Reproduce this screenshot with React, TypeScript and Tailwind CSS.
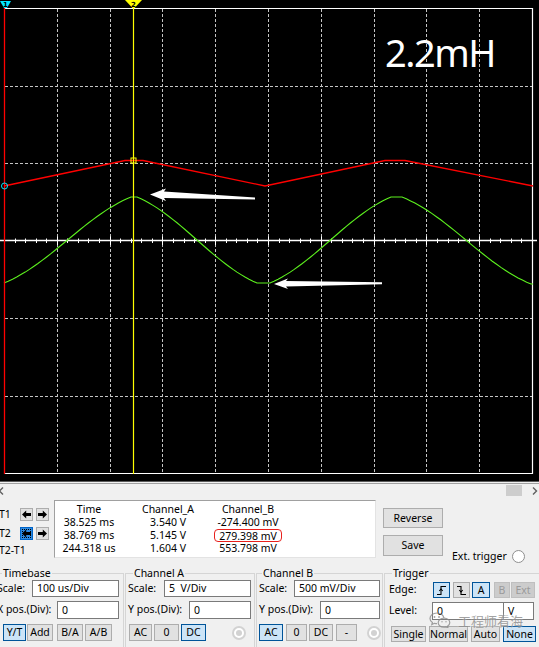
import React from "react";

type P = [number, number];

function ease(x0: number, y0: number, x1: number, y1: number, n = 30): P[] {
  const out: P[] = [];
  for (let i = 0; i <= n; i++) {
    const t = i / n;
    const f = 0.6 * t + 0.2 * (1 - Math.cos(Math.PI * t));
    out.push([x0 + (x1 - x0) * t, y0 + (y1 - y0) * f]);
  }
  return out;
}

const pts = (a: P[]) => a.map((p) => `${p[0].toFixed(1)},${p[1].toFixed(1)}`).join(" ");

function Scope() {
  const vx = Array.from({ length: 9 }, (_, i) => 4 + 52.8 * (i + 1));
  const hy = [85.5, 163, 318, 395.5];
  const ticks = Array.from({ length: 51 }, (_, i) => 4 + 10.56 * i);
  const green: P[] = [
    ...ease(4, 283, 131, 197),
    [137, 197],
    ...ease(137, 197, 257, 283),
    [270, 283],
    ...ease(270, 283, 391, 197),
    [402, 197],
    ...ease(402, 197, 531, 284),
    [533, 284],
  ];
  const red: P[] = [
    [4, 186],
    [125, 160.5],
    [143, 160.5],
    [265, 186],
    [385, 160.5],
    [405, 160.5],
    [533, 186],
  ];
  return (
    <div className="relative h-[481px] bg-black">
      <svg width="539" height="481" viewBox="0 0 539 481" className="block">
        {vx.map((x) => (
          <line key={"v" + x} x1={Math.round(x) + 0.5} y1={9} x2={Math.round(x) + 0.5} y2={473} stroke="#c4c4c4" strokeWidth={1} strokeDasharray="3 2" />
        ))}
        {hy.map((y) => (
          <line key={"h" + y} x1={5} y1={Math.round(y) + 0.5} x2={532} y2={Math.round(y) + 0.5} stroke="#c4c4c4" strokeWidth={1} strokeDasharray="3 2" />
        ))}
        {/* frame */}
        <line x1={4} y1={8.5} x2={533} y2={8.5} stroke="#fff" strokeWidth={1.2} />
        <line x1={4} y1={473.5} x2={533} y2={473.5} stroke="#fff" strokeWidth={1.2} />
        <line x1={532.5} y1={8} x2={532.5} y2={474} stroke="#fff" strokeWidth={1.2} />
        {/* axis */}
        <line x1={0} y1={240.5} x2={537} y2={240.5} stroke="#fff" strokeWidth={1.3} />
        {ticks.map((x, i) => (
          <line
            key={"t" + i}
            x1={Math.round(x) + 0.5}
            y1={i % 5 === 0 ? 236.5 : 238.5}
            x2={Math.round(x) + 0.5}
            y2={i % 5 === 0 ? 245 : 243}
            stroke="#fff"
            strokeWidth={1}
          />
        ))}
        {/* waves */}
        <polyline points={pts(red)} fill="none" stroke="#ff0000" strokeWidth={1.3} />
        <polyline points={pts(green)} fill="none" stroke="#5cf01e" strokeWidth={1.1} />
        {/* cursors */}
        <line x1={4.5} y1={8} x2={4.5} y2={474} stroke="#ff0000" strokeWidth={1.3} />
        <line x1={133.5} y1={8} x2={133.5} y2={474} stroke="#ffff00" strokeWidth={1.2} />
        <polygon points="0,1 11,1 7,8 4,8" fill="#00e5ff" />
        <text x={5.5} y={7} fontSize={7} fontFamily="DejaVu Sans, sans-serif" fontWeight={700} textAnchor="middle" fill="#000">1</text>
        <polygon points="125,0 142,0 134.5,8 132.5,8" fill="#ffff00" />
        <text x={133.5} y={6.5} fontSize={7} fontFamily="DejaVu Sans, sans-serif" fontWeight={700} textAnchor="middle" fill="#000">2</text>
        <circle cx={4.5} cy={186} r={3} fill="none" stroke="#00e5ff" strokeWidth={1} />
        <rect x={131} y={158} width={5} height={5} fill="none" stroke="#ffff00" strokeWidth={1} />
        {/* arrows */}
        <polygon points="150,194.5 166,188.5 164,191.5 255,197.5 255,199.5 164,198 166,201" fill="#fff" />
        <polygon points="274,284 288,278.5 286,281 382,282.3 382,284.3 286,286.5 288,289" fill="#fff" />
      </svg>
      <div className="absolute left-[385px] top-[33px] text-[38px] leading-none tracking-[-1.5px] text-white font-['Noto_Sans',sans-serif]">
        2.2mH
      </div>
    </div>
  );
}

function ArrowL() {
  return (
    <svg width="9" height="9" viewBox="0 0 9 9">
      <path d="M0 4.5 L4.2 0.5 V3 H9 V6 H4.2 V8.5 Z" fill="#000" />
    </svg>
  );
}
function ArrowR() {
  return (
    <svg width="9" height="9" viewBox="0 0 9 9">
      <path d="M9 4.5 L4.8 0.5 V3 H0 V6 H4.8 V8.5 Z" fill="#000" />
    </svg>
  );
}

function TBtn({ sel, children }: { sel?: boolean; children: React.ReactNode }) {
  return sel ? (
    <div className="w-[13px] h-[13px] flex items-center justify-center bg-[#2f8ae0] border border-[#0064c8] outline-1 outline-dotted outline-black outline-offset-[-3px]">
      {children}
    </div>
  ) : (
    <div className="w-[13px] h-[13px] flex items-center justify-center bg-[#e1e1e1] border border-[#adadad]">{children}</div>
  );
}

function Btn({
  children,
  className,
  sel,
  dis,
}: {
  children?: React.ReactNode;
  className: string;
  sel?: boolean;
  dis?: boolean;
}) {
  const tone = sel
    ? "bg-[#cce4f7] border-[#005499]"
    : dis
    ? "bg-[#cccccc] border-[#bfbfbf] text-[#9a9a9a]"
    : "bg-[#e1e1e1] border-[#adadad]";
  return <div className={`shrink-0 flex items-center justify-center border leading-none ${tone} ${className}`}>{children}</div>;
}

function Box({ children, className }: { children?: React.ReactNode; className: string }) {
  return <div className={`shrink-0 bg-white border border-[#7a7a7a] flex items-center pl-[4px] leading-none ${className}`}>{children}</div>;
}

function DisRadio() {
  return (
    <div className="shrink-0 w-[14px] h-[14px] rounded-full border-2 border-[#d2d2d2] bg-white flex items-center justify-center">
      <div className="w-[6px] h-[6px] rounded-full bg-[#d2d2d2]" />
    </div>
  );
}

function Panel() {
  return (
    <div className="h-[166px] flex flex-col">
      <div className="h-[3px] shrink-0 border-t border-[#5a5a5a] border-b border-b-[#a0a0a0]" />
      {/* scrollbar */}
      <div className="h-[13px] shrink-0 flex items-center justify-between">
        <svg width="6" height="8" viewBox="0 0 6 8" className="ml-[-2px]">
          <path d="M5 0.5 L1.5 4 L5 7.5" fill="none" stroke="#606060" strokeWidth={1.4} />
        </svg>
        <div className="flex items-center">
          <div className="w-[16px] h-[11px] bg-[#cdcdcd]" />
          <svg width="8" height="8" viewBox="0 0 8 8" className="ml-[9px]">
            <path d="M2 0.5 L5.5 4 L2 7.5" fill="none" stroke="#606060" strokeWidth={1.4} />
          </svg>
        </div>
      </div>
      {/* middle row */}
      <div className="h-[69px] shrink-0 flex items-start">
        <div className="w-[55px] ml-[-1px] shrink-0 pt-[11px]">
          <div className="flex items-center h-[13px]">
            <span className="w-[21px] leading-none">T1</span>
            <TBtn>
              <ArrowL />
            </TBtn>
            <div className="w-[3px]" />
            <TBtn>
              <ArrowR />
            </TBtn>
          </div>
          <div className="flex items-center h-[13px] mt-[6px]">
            <span className="w-[21px] leading-none">T2</span>
            <TBtn sel>
              <ArrowL />
            </TBtn>
            <div className="w-[3px]" />
            <TBtn>
              <ArrowR />
            </TBtn>
          </div>
          <div className="mt-[4px] leading-[12px]">T2-T1</div>
        </div>
        <div className="w-[322px] h-[58px] mt-[3px] shrink-0 bg-white border border-[#a0a0a0] border-r-[#e3e3e3] border-b-[#e3e3e3] pt-[2px] flex leading-[13px] text-[10.5px]">
          <div className="w-[68px] text-center">
            <div>Time</div>
            <div>38.525 ms</div>
            <div>38.769 ms</div>
            <div>244.318 us</div>
          </div>
          <div className="w-[90px] text-center">
            <div>Channel_A</div>
            <div>3.540 V</div>
            <div>5.145 V</div>
            <div>1.604 V</div>
          </div>
          <div className="w-[70px] text-center">
            <div>Channel_B</div>
            <div>-274.400 mV</div>
            <div className="h-[13px] flex items-center justify-center">
              <span className="border-[1.5px] border-[#e8201c] rounded-[4px] px-[4px] h-[13px] leading-[10px] flex items-center whitespace-nowrap">279.398 mV</span>
            </div>
            <div>553.798 mV</div>
          </div>
        </div>
        <div className="ml-[7px] mt-[11px] flex flex-col gap-[7px] shrink-0">
          <Btn className="w-[60px] h-[20px]">Reverse</Btn>
          <Btn className="w-[60px] h-[21px]">Save</Btn>
        </div>
        <div className="ml-[9px] mt-[53px] flex items-center shrink-0">
          <span className="leading-[13px] whitespace-nowrap">Ext. trigger</span>
          <div className="ml-[5px] w-[13px] h-[13px] rounded-full border border-[#8f8f8f] bg-white" />
        </div>
      </div>
      {/* groups */}
      <div className="flex ml-[-6px] items-start">
        <fieldset className="w-[130px] h-[90px] shrink-0 border border-[#d5d5d5]">
          <legend className="ml-[7px] px-[1px] leading-[14px]">Timebase</legend>
          <div className="flex items-center justify-between pl-[2px] pr-[4px] h-[17px]">
            <span>Scale:</span>
            <Box className="w-[87px] h-[17px]">100 us/Div</Box>
          </div>
          <div className="flex items-center justify-between pl-[2px] pr-[4px] h-[18px] mt-[4px]">
            <span className="whitespace-nowrap">X pos.(Div):</span>
            <Box className="w-[62px] h-[18px]">0</Box>
          </div>
          <div className="flex items-center pl-[8px] mt-[5px]">
            <Btn sel className="w-[23px] h-[17px]">Y/T</Btn>
            <Btn className="w-[26px] h-[17px] ml-[1px]">Add</Btn>
            <Btn className="w-[26px] h-[17px] ml-[4px]">B/A</Btn>
            <Btn className="w-[27px] h-[17px] ml-[2px]">A/B</Btn>
          </div>
        </fieldset>
        <fieldset className="w-[130px] h-[90px] ml-[1px] shrink-0 border border-[#d5d5d5]">
          <legend className="ml-[7px] px-[1px] leading-[14px]">Channel A</legend>
          <div className="flex items-center justify-between pl-[2px] pr-[3px] h-[17px]">
            <span>Scale:</span>
            <Box className="w-[87px] h-[17px]">5&nbsp;&nbsp;V/Div</Box>
          </div>
          <div className="flex items-center justify-between pl-[2px] pr-[3px] h-[18px] mt-[4px]">
            <span className="whitespace-nowrap">Y pos.(Div):</span>
            <Box className="w-[62px] h-[18px]">0</Box>
          </div>
          <div className="flex items-center pl-[3px] mt-[5px] h-[17px]">
            <Btn className="w-[23px] h-[17px]">AC</Btn>
            <Btn className="w-[25px] h-[17px] ml-[2px]">0</Btn>
            <Btn sel className="w-[25px] h-[17px] ml-[2px]">DC</Btn>
            <div className="ml-[26px]">
              <DisRadio />
            </div>
          </div>
        </fieldset>
        <fieldset className="w-[127px] h-[90px] ml-[1px] shrink-0 border border-[#d5d5d5]">
          <legend className="ml-[5px] px-[1px] leading-[14px]">Channel B</legend>
          <div className="flex items-center justify-between pl-[2px] pr-[2px] h-[17px]">
            <span>Scale:</span>
            <Box className="w-[86px] h-[17px]">500 mV/Div</Box>
          </div>
          <div className="flex items-center justify-between pl-[2px] pr-[2px] h-[18px] mt-[4px]">
            <span className="whitespace-nowrap">Y pos.(Div):</span>
            <Box className="w-[60px] h-[18px]">0</Box>
          </div>
          <div className="flex items-center pl-[2px] mt-[5px] h-[17px]">
            <Btn sel className="w-[24px] h-[17px]">AC</Btn>
            <Btn className="w-[21px] h-[17px] ml-[3px]">0</Btn>
            <Btn className="w-[24px] h-[17px] ml-[2px]">DC</Btn>
            <Btn className="w-[21px] h-[17px] ml-[3px]">-</Btn>
            <div className="ml-[10px]">
              <DisRadio />
            </div>
          </div>
        </fieldset>
        <fieldset className="w-[162px] h-[90px] ml-[1px] shrink-0 border border-[#d5d5d5]">
          <legend className="ml-[7px] px-[1px] leading-[14px]">Trigger</legend>
          <div className="flex items-center pl-[4px] mt-[2px] h-[16px]">
            <span className="w-[44px] shrink-0">Edge:</span>
            <Btn sel className="w-[17px] h-[16px]">
              <svg width="11" height="11" viewBox="0 0 11 11">
                <path d="M1 9.5 H5 V1.5 H10" fill="none" stroke="#000" strokeWidth={1.1} />
                <path d="M3.3 6 L5 4 L6.7 6" fill="none" stroke="#000" strokeWidth={1.1} />
              </svg>
            </Btn>
            <Btn className="w-[17px] h-[16px] ml-[3px]">
              <svg width="11" height="11" viewBox="0 0 11 11">
                <path d="M1 1.5 H5 V9.5 H10" fill="none" stroke="#000" strokeWidth={1.1} />
                <path d="M3.3 5 L5 7 L6.7 5" fill="none" stroke="#000" strokeWidth={1.1} />
              </svg>
            </Btn>
            <Btn sel className="w-[18px] h-[16px] ml-[2px]">A</Btn>
            <Btn dis className="w-[16px] h-[16px] ml-[4px]">B</Btn>
            <Btn dis className="w-[24px] h-[16px] ml-[1px]">Ext</Btn>
          </div>
          <div className="flex items-center pl-[4px] mt-[4px] h-[18px]">
            <span className="w-[43px] shrink-0">Level:</span>
            <Box className="w-[72px] h-[18px]">0</Box>
            <Box className="w-[31px] h-[18px] ml-[-1px]">V</Box>
          </div>
          <div className="flex items-center pl-[6px] mt-[6px] h-[16px]">
            <Btn className="w-[35px] h-[16px]">Single</Btn>
            <Btn className="w-[39px] h-[16px] ml-[3px]">Normal</Btn>
            <Btn className="w-[29px] h-[16px] ml-[3px]">Auto</Btn>
            <Btn sel className="w-[33px] h-[16px] ml-[3px]">None</Btn>
          </div>
        </fieldset>
      </div>
    </div>
  );
}

function Watermark() {
  return (
    <div className="absolute left-[429px] top-[612px] flex items-center opacity-80 pointer-events-none">
      <svg width="22" height="16" viewBox="0 0 22 16">
        <path d="M8 1 C3.8 1 1 3.6 1 6.5 C1 8.2 2 9.6 3.4 10.5 L2.8 12.6 L5.4 11.3 C6.2 11.5 7.1 11.7 8 11.7" fill="none" stroke="#8a8a8a" strokeWidth={1.2} />
        <path d="M8 1 C11.8 1 14.6 3.3 14.9 6" fill="none" stroke="#8a8a8a" strokeWidth={1.2} />
        <path d="M15 6.2 C11.6 6.2 9.2 8.3 9.2 10.8 C9.2 13.3 11.6 15.2 15 15.2 C15.7 15.2 16.4 15.1 17 14.9 L19 15.8 L18.5 14.2 C19.9 13.3 20.8 12.1 20.8 10.8 C20.8 8.3 18.4 6.2 15 6.2 Z" fill="none" stroke="#8a8a8a" strokeWidth={1.2} />
        <circle cx="5.5" cy="5" r="0.9" fill="#8a8a8a" />
        <circle cx="10" cy="5" r="0.9" fill="#8a8a8a" />
        <circle cx="13" cy="9.8" r="0.7" fill="#8a8a8a" />
        <circle cx="17" cy="9.8" r="0.7" fill="#8a8a8a" />
      </svg>
      <span className="ml-[7px] text-[13px] leading-none text-[#8c8c8c] font-['Noto_Sans_CJK_SC',sans-serif] [text-shadow:0_0_2px_#ffffff]">
        工程师看海
      </span>
    </div>
  );
}

export default function App() {
  return (
    <div className="relative w-[539px] h-[647px] overflow-hidden bg-[#f0f0f0] text-black text-[10.5px] font-['Noto_Sans',sans-serif]">
      <Scope />
      <Panel />
      <Watermark />
    </div>
  );
}
